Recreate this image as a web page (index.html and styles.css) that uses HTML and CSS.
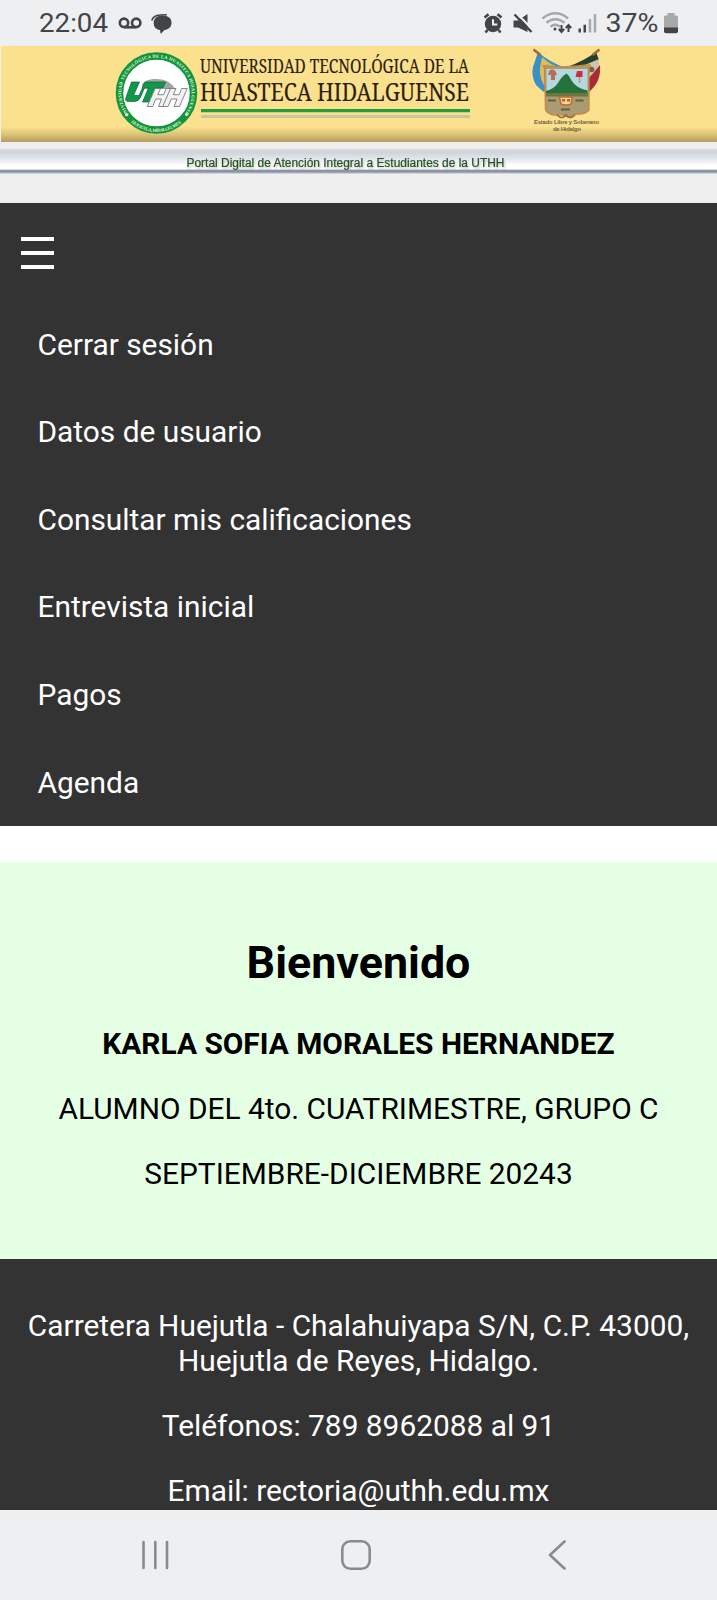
FILE: index.html
```html
<!DOCTYPE html>
<html lang="es">
<head>
<meta charset="utf-8">
<title>Portal Digital UTHH</title>
<link rel="stylesheet" href="styles.css">
</head>
<body>
<header class="status">
  <svg width="717" height="46" viewBox="0 0 717 46" fill="#434447">
    <text x="39" y="32.2" font-size="26" textLength="69" lengthAdjust="spacingAndGlyphs" class="clock">22:04</text>
    <g fill="none" stroke="#434447" stroke-width="2.6"><circle cx="124" cy="22.8" r="4.2"/><circle cx="136.200" cy="22.800" r="4.200"/><path d="M124 27.300h12.500"/></g>
    <path d="M162.500 15.500c6 0 9 3 9 7.300 0 4-2.800 6.600-7 7.200l-3.800 4-.7-4c-4.300-.5-6.300-3.200-6.300-7 0-4.600 3.200-7.500 8.800-7.500z"/>
    <path d="M151.800 20.500c.8-3.300 3.700-5.200 8.500-5.500l6.500-.2" fill="none" stroke="#434447" stroke-width="1.600"/>
    <circle cx="493" cy="24" r="8.200"/><path d="M484.500 17.500l4-3.200M501.500 17.500l-4-3.200M487.500 30l-2 2.500M498.500 30l2 2.500" stroke="#434447" stroke-width="2.600"/><path d="M493 19.200v5.300h4.300" fill="none" stroke="#eeeff1" stroke-width="2"/>
    <path d="M513.500 20.500h4.500l9.500-6.500v18l-9.500-4.500h-4.500z"/><path d="M516.500 13l17 17.500" stroke="#eeeff1" stroke-width="2.200"/><path d="M514.500 14.500l17 17.500" stroke="#434447" stroke-width="2.400"/>
    <g fill="none" stroke="#a7a8aa" stroke-width="2.500"><path d="M542.500 18.500c8-7 18-7 25.500 0M546.500 22.800c5.500-4.800 12.500-4.800 18 0M550.500 26.800c3-2.600 6.500-2.600 9.500 0"/></g>
    <circle cx="555" cy="29" r="1.500"/><path d="M561.500 25v6M558.800 29l2.700 3 2.700-3M568.500 32v-6M565.800 28l2.700-3 2.700 3" fill="none" stroke="#434447" stroke-width="2"/>
    <path d="M578.500 28.500h2.500v4h-2.500zM583.500 24.800h2.500v7.700h-2.500z"/><path d="M588.700 19h2.500v13.500h-2.500zM593.700 14h2.500v18.500h-2.500z" fill="#a7a8aa"/>
    <text x="605.500" y="32.200" font-size="26" textLength="53" lengthAdjust="spacingAndGlyphs" class="clock">37%</text>
    <path d="M667.500 13h7v2.500h2a1.500 1.500 0 0 1 1.500 1.500v11h-14V17a1.500 1.500 0 0 1 1.500-1.500h2z" fill="#a7a8aa"/><path d="M664 27.500h14v3.700a2 2 0 0 1-2 2h-10a2 2 0 0 1-2-2z"/>
  </svg>
</header>
<div class="banner">
  <svg width="717" height="96" viewBox="0 46 717 96">
    <defs><path id="sealTop" d="M129.100 115a35.200 35.200 0 1 1 54.800 0"/><path id="sealBottom" d="M126.800 118a38.800 38.800 0 0 0 59.400 0"/></defs>
    <circle cx="156.500" cy="93" r="37" fill="#fff" stroke="#13953e" stroke-width="7.500"/>
    <text class="seal"><textPath href="#sealTop" textLength="156">UNIVERSIDAD TECNOLÓGICA DE LA HUASTECA HIDALGUENSE</textPath></text>
    <text class="seal"><textPath href="#sealBottom" startOffset="6" textLength="55">HUEJUTLA, HIDALGO, MEX</textPath></text>
    <circle cx="126.500" cy="114.500" r="1.500" fill="#e9f5df"/><circle cx="186.500" cy="114.500" r="1.500" fill="#e9f5df"/>
    <path d="M142 84c5-7 27-8 33 5h-33z" fill="#a2a4a5"/>
    <path d="M131.500 82h8l-6 13.500h5.500l6-13.500h20.500l-2.400 5.800h-6.200L150.500 102h-8l6-14.200h-4l-3.700 9q-2 4.700-6 4.700h-6.300q-4.500 0-2-5.500z" fill="#10984a" stroke="#08663a" stroke-width=".7"/>
    <path id="h" d="M155 88.500h5.500l-2.600 6.200h5.800l2.500-6.200h5.500L164 106.500h-5.500l3-7.500h-5.800l-3 7.500h-5.500z" fill="#f2f2f2" stroke="#77797b" stroke-width=".9"/><use href="#h" x="15.500"/>
    <g class="university"><text x="200" y="72.500" font-size="20" textLength="269" lengthAdjust="spacingAndGlyphs">UNIVERSIDAD TECNOLÓGICA DE LA</text>
    <text x="200" y="100.500" font-size="25" textLength="269" lengthAdjust="spacingAndGlyphs">HUASTECA HIDALGUENSE</text></g>
    <path d="M201 109h269v3.300H201z" fill="#249c3c"/><path d="M201 115h269v3H201z" fill="#c9c5a4"/>
    <path d="M538 52q11 10 28 16l-22 24q-4-3-8-7-5-9-3-18z" fill="#3a8fc6"/><path d="M542 57q9 9 20 11l-16 20q-7-9-6-20z" fill="#dfbd53"/><path d="M547 64l7 5-8 10q-3-7 1-15z" fill="#8cabb0"/>
    <path d="M596 52q-12 9-29 15l12 5 20-12z" fill="#293f2d"/><path d="M599 59l-19 8 9 20 10-14z" fill="#cdc5ad"/><circle cx="591.500" cy="69.500" r="2.800" fill="#766142"/><path d="M600 65c1 12-3 20-11 27v-14z" fill="#a62d35"/>
    <path d="M533.500 49.500l7 5.500M599.500 49.500l-7 5.500" stroke="#a26a35" stroke-width="2.600"/>
    <path d="M544.500 68q-3-3 1-2 21 2 42-1 5-1 1.500 3v42q-5 5-11 4-5 0-9 3.500-5-3.500-11-2.500-9 1-12.500-5z" fill="#a99c72" stroke="#c9863f" stroke-width="1.300"/>
    <path d="M546.500 69h41v24h-41z" fill="#b4d7e2"/><path d="M546 91q8-2 12-8 4-7 8.500-9.500 3 2 5 7 5 8 16 10v4H546z" fill="#25713a"/><path d="M546 93h42v3.500h-42z" fill="#6f7540"/>
    <path d="M549 71q4-4 7 1l1 3h-9zM551 75h4v5h-4z" fill="#b96e54"/><path d="M577 71h5.500v6h-7z" fill="#cb2f3b"/><path d="M579.500 77v6" stroke="#bd8e77" stroke-width="1.400"/>
    <path d="M559.500 97h13l-1.500 7q-5 2-10 0z" fill="#eadba1" stroke="#c46a2b" stroke-width="1.500"/><path d="M562 99h3.200v2.500H562zM567 99h3.200v2.500H567z" fill="#c35b2c"/>
    <path d="M548 100.500h8M575.500 100.500h8M561 109.500h9" stroke="#655f42" stroke-width="1.800"/>
    <path d="M557 115q5 5 9 0q4 5 9 0" stroke="#8c713c" stroke-width="1.700" fill="none"/>
    <g class="state" text-anchor="middle"><text x="566.500" y="124.300" textLength="65">Estado Libre y Soberano</text><text x="567" y="131.300" textLength="28">de Hidalgo</text></g>
  </svg>
</div>
<div class="portal"><div class="portal-title"><svg width="717" height="25"><text x="186.500" y="18" textLength="318" lengthAdjust="spacingAndGlyphs">Portal Digital de Atención Integral a Estudiantes de la UTHH</text></svg></div></div>
<nav class="menu">
  <div class="hamburger"><span></span><span></span><span></span></div>
  <a>Cerrar sesión</a><a>Datos de usuario</a><a>Consultar mis calificaciones</a><a>Entrevista inicial</a><a>Pagos</a><a>Agenda</a>
</nav>
<main class="welcome">
  <h1>Bienvenido</h1>
  <p><strong>KARLA SOFIA MORALES HERNANDEZ</strong></p>
  <p>ALUMNO DEL 4to. CUATRIMESTRE, GRUPO C</p>
  <p>SEPTIEMBRE-DICIEMBRE 20243</p>
</main>
<footer class="contact">
  <p>Carretera Huejutla - Chalahuiyapa S/N, C.P. 43000,<br>Huejutla de Reyes, Hidalgo.</p>
  <p>Teléfonos: 789 8962088 al 91</p>
  <p>Email: rectoria@uthh.edu.mx</p>
</footer>
<div class="system-nav">
  <svg width="717" height="90" viewBox="0 1510 717 90" fill="none" stroke="#898a8c" stroke-width="2.600" stroke-linecap="round" stroke-linejoin="round"><path d="M143.500 1542v26M155.300 1542v26M167 1542v26M564.500 1541.500L550 1555l14.500 13.500"/><rect x="342.300" y="1541.300" width="27.400" height="27.400" rx="8"/></svg>
</div>
</body>
</html>
```
FILE: styles.css
```css
* { box-sizing: border-box; }
body { margin: 0; width: 717px; height: 1600px; overflow: hidden; display: flex; flex-direction: column; background: #fff; font: 29.87px/35px Roboto, sans-serif; }
svg { display: block; }
.status { height: 46px; background: #eeeff1; }
.clock { font-family: Roboto, sans-serif; }
.banner { height: 96px; background: linear-gradient(#fbe18e 0 84%, #e1c878 91%, #b39d62 100%); border-left: 1px solid #eeeff1; }
.banner svg { margin-left: -1px; }
.seal { font: bold 4.5px "Liberation Serif", serif; fill: #e9f5df; }
.university { font-family: "Noto Serif", "Liberation Serif", serif; fill: #2a200e; stroke: #2a200e; stroke-width: .15px; }
.state { font: bold 5.8px "Liberation Sans", sans-serif; fill: #6d6041; }
.portal { height: 60.5px; padding-top: 7px; background: #efefef; }
.portal-title { height: 25px; background: linear-gradient(#d7d9dc 0 8%, #cfd3da 12%, #e2e5ea 38%, #fff 65% 81%, #8b94a3 84% 92%, #e6e9ee 100%); }
.portal-title text { font: 12px "Liberation Sans", sans-serif; fill: #235222; stroke: #235222; stroke-width: .2px; filter: drop-shadow(1px 2px 1px #9999); }
.menu { height: 623.5px; padding: 34px 0 0 21px; background: #333; color: #fff; display: flex; flex-direction: column; }
.hamburger { display: flex; flex-direction: column; gap: 10px; width: 33px; height: 65px; }
.hamburger span { height: 4px; background: #fff; }
.menu a { height: 87.6px; flex: none; padding: 26.1px 0 0 16.5px; }
.welcome { height: 397.5px; margin-top: 35.5px; padding-top: 75px; background: #e5ffe5; text-align: center; color: #000; }
h1 { margin: 0 0 37px; font-size: 44.8px; line-height: 52px; }
p { margin: 0 0 30px; }
.contact { height: 251px; padding-top: 48.5px; background: #333; color: #fff; text-align: center; overflow: hidden; }
.system-nav { height: 90px; background: #eeeff1; }
```
